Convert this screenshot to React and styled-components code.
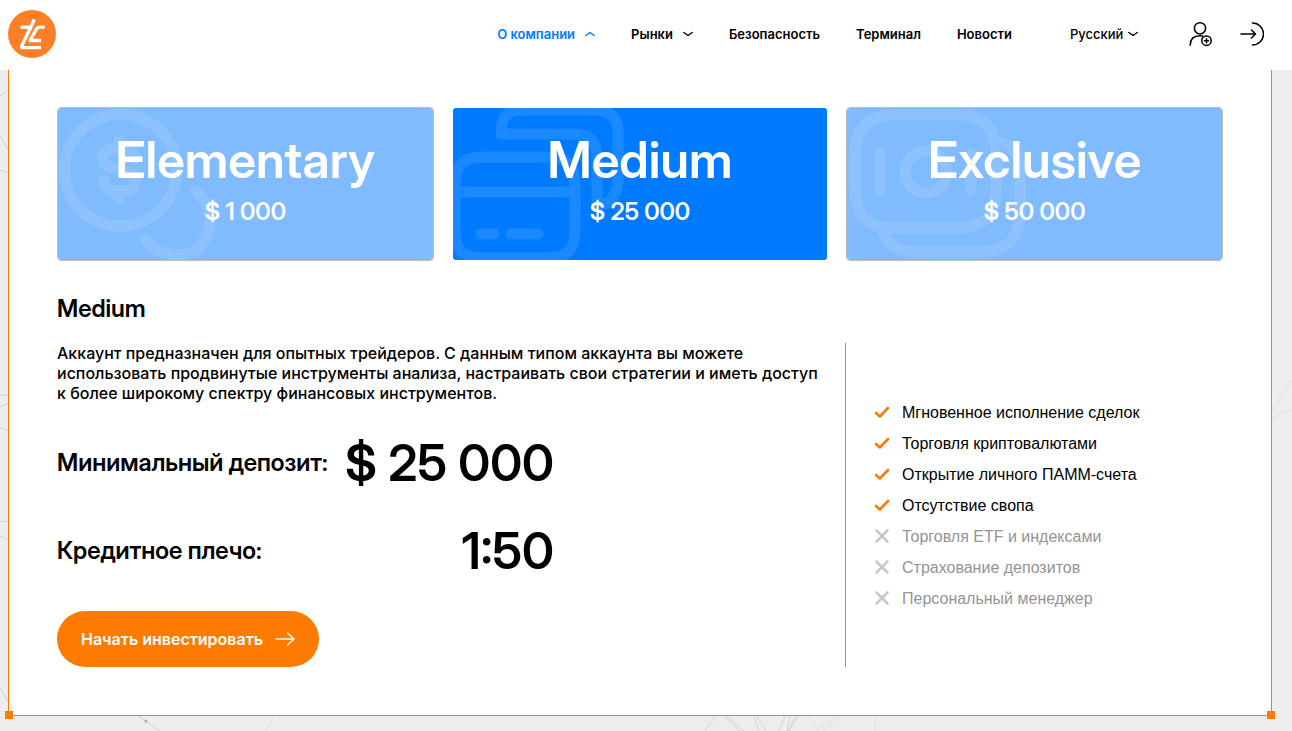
import React, { useState } from "react";
import styled, { createGlobalStyle } from "styled-components";

const GlobalStyle = createGlobalStyle`
  * {
    box-sizing: border-box;
  }
  body {
    margin: 0;
    background: #ededed;
    color: #000;
    font-family: Inter, "Liberation Sans", sans-serif;
  }
  button, select {
    font-family: inherit;
    color: inherit;
    border: none;
    background: none;
    padding: 0;
    cursor: pointer;
  }
`;

const Page = styled.div`
  position: relative;
  min-height: 100vh;
  overflow: hidden;
`;

const Backdrop = styled.svg`
  position: absolute;
  inset: 0;
  width: 100%;
  height: 100%;
  fill: none;
  stroke: #d2d2d2;
`;

const Header = styled.header`
  position: relative;
  display: flex;
  align-items: center;
  height: 70px;
  padding: 0 28px 2px 8px;
  background: #fff;
`;

const LogoLink = styled.a`
  display: flex;
  margin-right: auto;
`;

const Nav = styled.nav`
  display: flex;
  align-items: center;
  gap: 36px;
  margin-right: 58px;
`;

const NavLink = styled.a`
  color: #000;
  font-size: 13px;
  font-weight: 600;
  line-height: 20px;
  text-decoration: none;
`;

const NavButton = styled.button`
  display: flex;
  align-items: center;
  gap: 10px;
  font-size: 13px;
  font-weight: 600;
  line-height: 20px;
  color: ${({ $open }) => ($open ? "#007bff" : "#000")};
`;

const Language = styled.label`
  display: flex;
  align-items: center;
  gap: 4px;
  margin-right: 51px;
`;

const LanguageSelect = styled.select`
  appearance: none;
  font-size: 13px;
  font-weight: 500;
  line-height: 20px;
`;

const Account = styled.div`
  display: flex;
  gap: 27px;
`;

const IconLink = styled.a`
  display: flex;
  color: #000;
`;

const LineIcon = styled.svg`
  display: block;
  flex: none;
  fill: none;
  stroke: currentColor;
  stroke-linecap: round;
  stroke-linejoin: round;
`;

const Panel = styled.main`
  position: relative;
  margin: 0 20px 15px 8px;
  padding: 37px 48px 48px;
  background: #fff;
  border: 1px solid #ff7b00;
  border-top: none;
`;

const Corner = styled.span`
  position: absolute;
  bottom: -4px;
  ${({ $side }) => $side}: -4px;
  width: 8px;
  height: 8px;
  background: #ff7b00;
`;

const Plans = styled.div`
  display: grid;
  grid-template-columns: repeat(3, 1fr);
  gap: 18px;
`;

const PlanCard = styled.button`
  position: relative;
  display: flex;
  flex-direction: column;
  align-items: center;
  height: 154px;
  padding-top: 20px;
  overflow: hidden;
  color: #fff;
  background: ${({ $active }) => ($active ? "#007bff" : "#80bbff")};
  background-clip: padding-box;
  border: 1px solid ${({ $active }) => ($active ? "transparent" : "#bcbcbc")};
  border-radius: 4px;
`;

const PlanArt = styled.svg`
  position: absolute;
  left: 0;
  top: 0;
  fill: none;
  stroke: #fff;
  stroke-width: 11;
  stroke-linecap: round;
  stroke-linejoin: round;
  opacity: 0.1;
`;

const PlanName = styled.span`
  position: relative;
  font-family: "Inter Display", Inter, "Liberation Sans", sans-serif;
  font-variation-settings: "opsz" 32;
  font-size: 50px;
  font-weight: 600;
  line-height: 64px;
`;

const PlanPrice = styled.span`
  position: relative;
  font-family: "Inter Display", Inter, "Liberation Sans", sans-serif;
  font-variation-settings: "opsz" 32;
  font-size: 24px;
  font-weight: 600;
  line-height: 40px;
`;

const PlanTitle = styled.h2`
  margin: 33px 0 19px;
  font-family: "Inter Display", Inter, "Liberation Sans", sans-serif;
  font-variation-settings: "opsz" 32;
  font-size: 24px;
  font-weight: 600;
  line-height: 30px;
`;

const Details = styled.div`
  display: flex;
`;

const Summary = styled.section`
  flex: 1;
  display: flex;
  flex-direction: column;
  align-items: flex-start;
`;

const Description = styled.p`
  max-width: 772px;
  margin: 0 0 30px;
  font-size: 16px;
  font-weight: 500;
  line-height: 20px;
`;

const Terms = styled.dl`
  display: grid;
  gap: 28px;
  width: 497px;
  margin: 0 0 30px;
  white-space: nowrap;
  font-family: "Inter Display", Inter, "Liberation Sans", sans-serif;
  font-variation-settings: "opsz" 32;
`;

const Term = styled.div`
  display: flex;
  align-items: center;
  justify-content: space-between;

  dt {
    font-size: 24px;
    font-weight: 600;
    line-height: 30px;
  }

  dd {
    margin: 0;
    font-size: 50px;
    font-weight: 600;
    line-height: 60px;
  }
`;

const InvestButton = styled.button`
  display: flex;
  align-items: center;
  gap: 12px;
  height: 56px;
  padding: 0 24px;
  border-radius: 28px;
  background: #ff7b00;
  color: #fff;
  font-size: 16px;
  font-weight: 600;
`;

const Features = styled.ul`
  display: flex;
  flex-direction: column;
  justify-content: center;
  width: 378px;
  margin: 0;
  padding: 0 0 0 28px;
  list-style: none;
  border-left: 1px solid #ff7b00;
`;

const Feature = styled.li`
  display: flex;
  align-items: center;
  gap: 12px;
  font-family: "Liberation Sans", Arial, sans-serif;
  font-size: 16px;
  line-height: 31px;
  color: ${({ $off }) => ($off ? "#949494" : "#000")};
`;

const plans = [
  {
    name: "Elementary",
    price: "$ 1 000",
    art: (
      <>
        <circle cx="62.5" cy="62.3" r="56" />
        <path d="M61 33v6M61 84v7M77 51c0-6-4-10-10-10H56c-6 0-11 4-11 10 0 14 32 8 32 22 0 6-4 10-10 10H56c-6 0-10-5-10-11" />
        <path d="M137 83C162 100 155 147 120 147c-14 0-25-6-33-15" />
      </>
    ),
  },
  {
    name: "Medium",
    price: "$ 25 000",
    art: (
      <>
        <path d="M2 77c0-20 8-28 28-28h64c20 0 28 8 28 28v45c0 20-8 28-28 28H30c-20 0-28-8-28-28zM2 84h120M28 126h13M58 126h27" />
        <path d="M48 26h72c17 0 24 8 24 24v47c13 0 21-8 21-26V26c0-16-7-24-24-24H69C54 2 48 9 48 26z" />
      </>
    ),
  },
  {
    name: "Exclusive",
    price: "$ 50 000",
    art: (
      <>
        <path d="M8 47C8 20 21 7 48 7h62c27 0 39 13 39 40v33c0 27-12 40-39 40H48C21 120 8 107 8 80z" />
        <circle cx="79" cy="64" r="21" />
        <path d="M33 46v36M124 46v36M153 34c14 4 20 14 20 34v36c0 27-13 40-40 40H70c-18 0-30-7-35-22" />
      </>
    ),
  },
];

const features = [
  { text: "Мгновенное исполнение сделок", on: true },
  { text: "Торговля криптовалютами", on: true },
  { text: "Открытие личного ПАММ-счета", on: true },
  { text: "Отсутствие свопа", on: true },
  { text: "Торговля ETF и индексами", on: false },
  { text: "Страхование депозитов", on: false },
  { text: "Персональный менеджер", on: false },
];

const Chevron = ({ up }) => (
  <LineIcon width="10" height="8" viewBox="0 0 10 8" strokeWidth="1.4">
    <path d={up ? "M.8 5.500L5 2.500l4.200 3" : "M.8 2.500L5 5.500l4.200-3"} />
  </LineIcon>
);

const Logo = () => (
  <svg width="48" height="48" viewBox="0 0 48 48">
    <circle cx="24" cy="24" r="24" fill="#ff7f27" />
    <g fill="none" stroke="#fff" strokeWidth="3.4" strokeLinejoin="round">
      <path d="M12.600 17.300h10.500M26.200 9.300l-3.400 8-9 18.100c-.8 2 0 2.200 1.400 2.200H33" />
      <path d="M36.600 17.100h-4.800c-2 0-2.700.7-3.500 2.200l-6.300 11.200H33" />
    </g>
  </svg>
);

const App = () => {
  const [active, setActive] = useState("Medium");
  const plan = plans.find((item) => item.name === active);

  return (
    <Page>
      <GlobalStyle />
      <Backdrop aria-hidden="true">
        <path d="M0 96l8-6M0 136l8 14M0 170l8 3M0 395h8M0 407l8-4M0 428l8 3M0 522l8-1M0 536l8 4M0 688l8 14" />
        <path d="M138 716l22 15M716 716l-11 15M724 716l16 15M726 716l18 15M754 716l5 15M757 716l9 15M785 716l-6 15M790 716l-3 15M796 716l-8 15M798 716l-9 15" />
        <path
          stroke="#e0e0e0"
          d="M274 716l-8 15M808 716l11 15M837 716l-21 15M841 716l-18 15M875 716v15M1272 411l20-31M1272 418l20-9"
        />
        <circle cx="146" cy="721" r="1.500" fill="#aaa" stroke="none" />
      </Backdrop>

      <Header>
        <LogoLink href="#" aria-label="TC">
          <Logo />
        </LogoLink>
        <Nav>
          <NavButton $open>
            О компании <Chevron up />
          </NavButton>
          <NavButton>
            Рынки <Chevron />
          </NavButton>
          <NavLink href="#security">Безопасность</NavLink>
          <NavLink href="#terminal">Терминал</NavLink>
          <NavLink href="#news">Новости</NavLink>
        </Nav>
        <Language>
          <LanguageSelect aria-label="Язык">
            <option>Русский</option>
          </LanguageSelect>
          <Chevron />
        </Language>
        <Account>
          <IconLink href="#register" aria-label="Регистрация">
            <LineIcon width="24" height="26" viewBox="0 0 24 26" strokeWidth="1.500">
              <circle cx="11" cy="7.300" r="5.600" />
              <path d="M1.200 24.300c0-6.300 3.800-9.600 9.800-9.600 1 0 1.900.1 2.700.3" />
              <circle cx="17.500" cy="19.700" r="4.700" />
              <path d="M17.500 17.700v4M15.500 19.700h4" />
            </LineIcon>
          </IconLink>
          <IconLink href="#login" aria-label="Войти">
            <LineIcon width="24" height="26" viewBox="0 0 24 26" strokeWidth="1.500">
              <path d="M1 13h14.500M11.500 9l4 4-4 4M12.500 2a11 11 0 0 1 0 22" />
            </LineIcon>
          </IconLink>
        </Account>
      </Header>

      <Panel>
        <Plans>
          {plans.map((item) => (
            <PlanCard
              key={item.name}
              $active={item.name === active}
              aria-pressed={item.name === active}
              onClick={() => setActive(item.name)}
            >
              <PlanArt width="180" height="152" viewBox="0 0 180 152" aria-hidden="true">
                {item.art}
              </PlanArt>
              <PlanName>{item.name}</PlanName>
              <PlanPrice>{item.price}</PlanPrice>
            </PlanCard>
          ))}
        </Plans>

        <PlanTitle>{plan.name}</PlanTitle>
        <Details>
          <Summary>
            <Description>
              Аккаунт предназначен для опытных трейдеров. С данным типом аккаунта вы можете
              использовать продвинутые инструменты анализа, настраивать свои стратегии и иметь
              доступ к&nbsp;более широкому спектру финансовых инструментов.
            </Description>
            <Terms>
              <Term>
                <dt>Минимальный депозит:</dt>
                <dd>{plan.price}</dd>
              </Term>
              <Term>
                <dt>Кредитное плечо:</dt>
                <dd>1:50</dd>
              </Term>
            </Terms>
            <InvestButton>
              Начать инвестировать
              <LineIcon width="20" height="14" viewBox="0 0 20 14" strokeWidth="1.300">
                <path d="M1 7h18M12.500 1L19 7l-6.500 6" />
              </LineIcon>
            </InvestButton>
          </Summary>
          <Features>
            {features.map(({ text, on }) => (
              <Feature key={text} $off={!on}>
                <LineIcon
                  width="16"
                  height="16"
                  viewBox="0 0 16 16"
                  strokeWidth="2.600"
                  color={on ? "#ff7b00" : "#c8c8c8"}
                >
                  <path d={on ? "M2 9l3.800 3.500L14 4" : "M2.500 2.500l11 11M13.500 2.500l-11 11"} />
                </LineIcon>
                {text}
              </Feature>
            ))}
          </Features>
        </Details>
        <Corner $side="left" />
        <Corner $side="right" />
      </Panel>
    </Page>
  );
};

export default App;
